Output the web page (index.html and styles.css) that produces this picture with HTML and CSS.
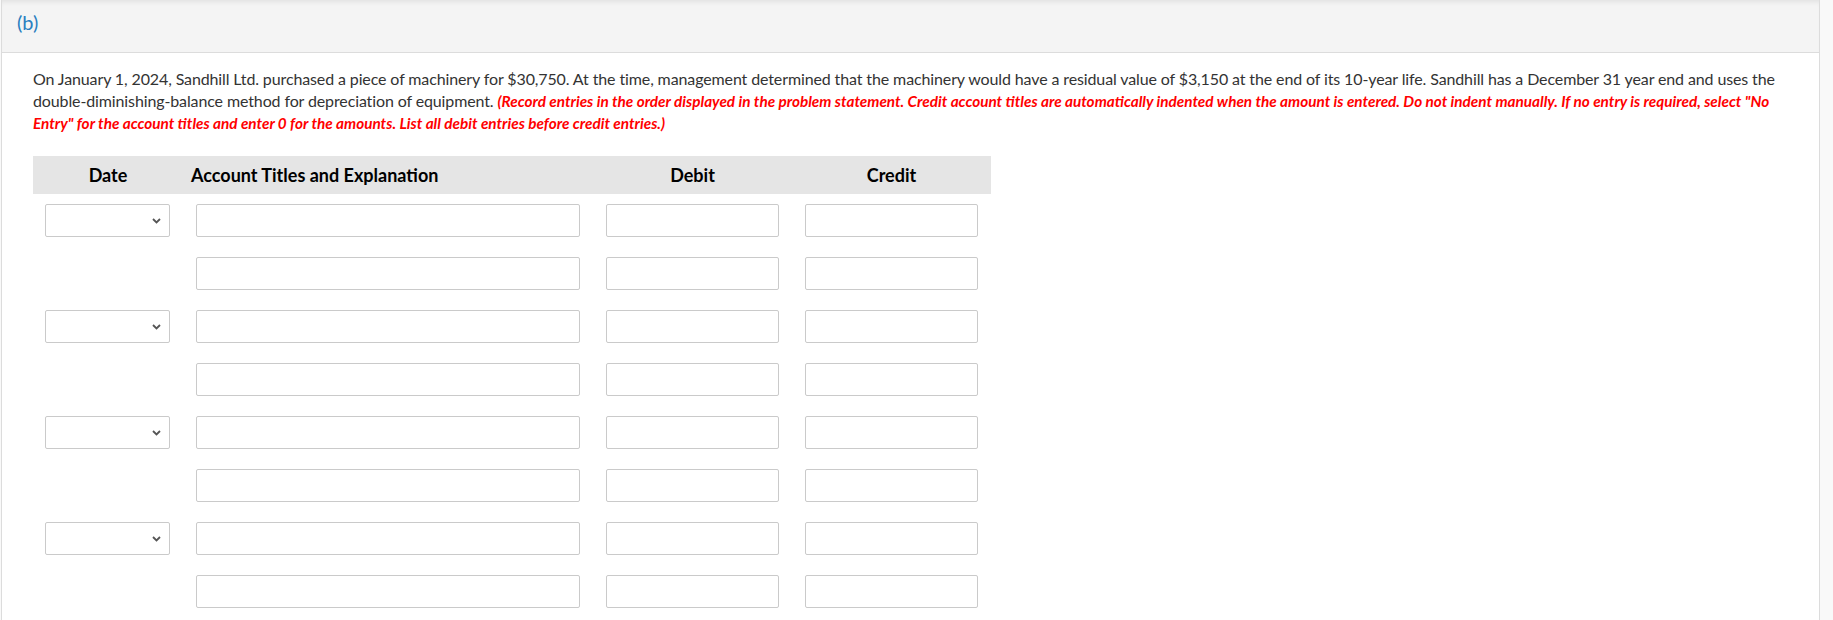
FILE: index.html
```html
<!DOCTYPE html>
<html>
<head>
<meta charset="utf-8">
<link rel="stylesheet" href="styles.css">
</head>
<body>
<div class="panel">
  <div class="panel-head"><span class="part">(b)</span></div>
  <div class="panel-body">
    <p class="question">On January 1, 2024, Sandhill Ltd. purchased a piece of machinery for $30,750. At the time, management determined that the machinery would have a residual value of $3,150 at the end of its 10-year life. Sandhill has a December 31 year end and uses the double-diminishing-balance method for depreciation of equipment. <em class="note">(Record entries in the order displayed in the problem statement. Credit account titles are automatically indented when the amount is entered. Do not indent manually. If no entry is required, select "No Entry" for the account titles and enter 0 for the amounts. List all debit entries before credit entries.)</em></p>

    <div class="journal">
      <div class="jrow jhead">
        <div class="hc c-date">Date</div>
        <div class="hc c-acct">Account Titles and Explanation</div>
        <div class="hc c-num">Debit</div>
        <div class="hc c-num">Credit</div>
      </div>

      <div class="jrow">
        <div class="cell"><div class="sel"><svg class="chev" width="9" height="6" viewBox="0 0 9 6"><path d="M1 1 L4.5 4.5 L8 1" fill="none" stroke="#555" stroke-width="1.8"/></svg></div></div>
        <div class="cell"><div class="inp"></div></div>
        <div class="cell"><div class="inp"></div></div>
        <div class="cell"><div class="inp"></div></div>
      </div>
      <div class="jrow">
        <div class="cell"></div>
        <div class="cell"><div class="inp"></div></div>
        <div class="cell"><div class="inp"></div></div>
        <div class="cell"><div class="inp"></div></div>
      </div>
      <div class="jrow">
        <div class="cell"><div class="sel"><svg class="chev" width="9" height="6" viewBox="0 0 9 6"><path d="M1 1 L4.5 4.5 L8 1" fill="none" stroke="#555" stroke-width="1.8"/></svg></div></div>
        <div class="cell"><div class="inp"></div></div>
        <div class="cell"><div class="inp"></div></div>
        <div class="cell"><div class="inp"></div></div>
      </div>
      <div class="jrow">
        <div class="cell"></div>
        <div class="cell"><div class="inp"></div></div>
        <div class="cell"><div class="inp"></div></div>
        <div class="cell"><div class="inp"></div></div>
      </div>
      <div class="jrow">
        <div class="cell"><div class="sel"><svg class="chev" width="9" height="6" viewBox="0 0 9 6"><path d="M1 1 L4.5 4.5 L8 1" fill="none" stroke="#555" stroke-width="1.8"/></svg></div></div>
        <div class="cell"><div class="inp"></div></div>
        <div class="cell"><div class="inp"></div></div>
        <div class="cell"><div class="inp"></div></div>
      </div>
      <div class="jrow">
        <div class="cell"></div>
        <div class="cell"><div class="inp"></div></div>
        <div class="cell"><div class="inp"></div></div>
        <div class="cell"><div class="inp"></div></div>
      </div>
      <div class="jrow">
        <div class="cell"><div class="sel"><svg class="chev" width="9" height="6" viewBox="0 0 9 6"><path d="M1 1 L4.5 4.5 L8 1" fill="none" stroke="#555" stroke-width="1.8"/></svg></div></div>
        <div class="cell"><div class="inp"></div></div>
        <div class="cell"><div class="inp"></div></div>
        <div class="cell"><div class="inp"></div></div>
      </div>
      <div class="jrow">
        <div class="cell"></div>
        <div class="cell"><div class="inp"></div></div>
        <div class="cell"><div class="inp"></div></div>
        <div class="cell"><div class="inp"></div></div>
      </div>
    </div>
  </div>
</div>
</body>
</html>
```

FILE: styles.css
```css
html, body {
  margin: 0;
  padding: 0;
  background: #f9f9f9;
  font-family: Lato, "Open Sans", "Liberation Sans", sans-serif;
}

.panel {
  margin-left: 1px;
  width: 1817px;
  min-height: 620px;
  background: #fff;
  border-left: 1px solid #dcdcdc;
  border-right: 1px solid #dcdcdc;
  box-sizing: content-box;
}

.panel-head {
  height: 52px;
  background: #f4f4f4;
  border-bottom: 1px solid #dcdcdc;
  box-shadow: inset 0 5px 5px -3px rgba(0, 0, 0, 0.08);
  display: flex;
  align-items: center;
  padding-left: 15px;
}

.part {
  color: #2a7fc0;
  font-size: 20px;
  line-height: 24px;
  margin-top: -8px;
}

.panel-body {
  padding: 15px 20px 0 31px;
}

.question {
  margin: 0;
  font-size: 16px;
  line-height: 22px;
  letter-spacing: -0.12px;
  color: #333;
}

.note {
  color: #f00;
  font-weight: 700;
  font-style: italic;
  font-size: 15.3px;
  letter-spacing: 0;
}

.journal {
  margin-top: 22px;
  width: 958px;
}

.jrow {
  display: grid;
  grid-template-columns: 150px 410px 199px 199px;
  height: 53px;
}

.jhead {
  height: 38px;
  background: #e5e5e5;
  align-items: center;
}

.hc {
  font-weight: 700;
  font-size: 18px;
  color: #000;
}

.c-date, .c-num {
  text-align: center;
}

.c-acct {
  padding-left: 8px;
}

.cell {
  padding: 10px 13px;
}

.cell:first-child {
  padding-left: 12px;
}

.inp, .sel {
  height: 31px;
  border: 1px solid #cacaca;
  border-radius: 2px;
  background: #fff;
}

.sel {
  display: flex;
  align-items: center;
  justify-content: flex-end;
  padding-right: 8px;
}

.chev {
  display: block;
}
```
